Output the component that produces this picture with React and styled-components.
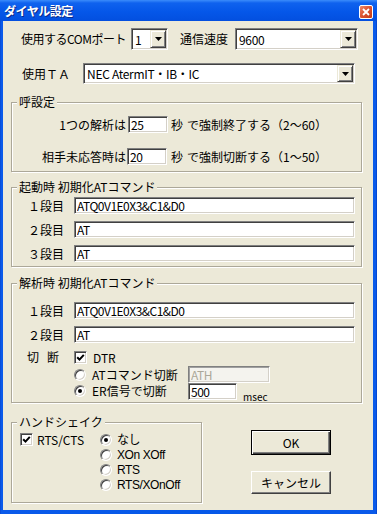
import React from 'react';
import styled, { createGlobalStyle } from 'styled-components';

const GlobalStyle = createGlobalStyle`
  html, body {
    margin: 0;
    padding: 0;
    background: #fff;
  }
  body {
    font-family: "Noto Sans CJK JP", "Noto Sans", sans-serif;
    font-size: 12px;
    color: #000;
  }
`

const Window = styled.div`
  width: 377px;
  height: 514px;
  display: flex;
  flex-direction: column;
  background: linear-gradient(90deg, #0843C8 0, #0A5AEA 1px, #0558E8 50%, #0A5AEA calc(100% - 1px), #0036B8 100%);
`
const TitleBar = styled.div`
  height: 21px;
  flex: none;
  display: flex;
  align-items: center;
  justify-content: space-between;
  padding: 0 4px 0 4px;
  background: linear-gradient(#3B8CFB 0, #0F62EE 3px, #0557E9 55%, #034FDF 100%);
`
const Title = styled.div`
  color: #fff;
  font-weight: bold;
  font-size: 12px;
  line-height: 14px;
  letter-spacing: -0.5px;
  text-shadow: 1px 1px 0 #0A2A8A;
`
const CloseButton = styled.div`
  width: 12px;
  height: 12px;
  margin-top: 2px;
  border: 1px solid #fff;
  border-radius: 2px;
  background: linear-gradient(135deg, #EE8A6A 0, #DD5533 45%, #C23A18 100%);
  display: flex;
  align-items: center;
  justify-content: center;
`
const Client = styled.div`
  flex: 1;
  margin: 0 4px 4px 3px;
  padding: 7px 11px 0 8px;
  background: #ECE9D8;
  display: flex;
  flex-direction: column;
`
const Row = styled.div`
  display: flex;
  align-items: center;
  height: ${p => p.$h}px;
  margin: ${p => p.$top || 0}px 0 0 ${p => p.$left || 0}px;
`
const Label = styled.span`
  flex: none;
  width: ${p => p.$w ? `${p.$w}px` : 'auto'};
  margin-left: ${p => p.$ml || 0}px;
  text-align: ${p => p.$right ? 'right' : 'left'};
  letter-spacing: ${p => p.$ls || 0}px;
  line-height: 14px;
  white-space: nowrap;
`
const ComboBox = styled.div`
  flex: none;
  box-sizing: border-box;
  width: ${p => p.$w}px;
  height: ${p => p.$h}px;
  display: flex;
  align-items: stretch;
  background: #fff;
  border: 1px solid;
  border-color: #808080 #fff #fff #808080;
  box-shadow: inset 1px 1px 0 #404040, inset -1px -1px 0 #D4D0C8;
  padding: 1px;
`
const ComboText = styled.span`
  flex: 1;
  padding-left: 2px;
  display: flex;
  align-items: center;
  white-space: nowrap;
  overflow: hidden;
  letter-spacing: -0.3px;
`
const DropButton = styled.span`
  flex: none;
  width: 16px;
  box-sizing: border-box;
  display: flex;
  align-items: center;
  justify-content: center;
  background: #ECE9D8;
  border: 1px solid;
  border-color: #ECE9D8 #404040 #404040 #ECE9D8;
  box-shadow: inset 1px 1px 0 #fff, inset -1px -1px 0 #808080;
`
const Group = styled.fieldset`
  margin: ${p => p.$top}px 0 0 0;
  padding: 0;
  width: ${p => p.$w ? `${p.$w}px` : 'auto'};
  box-sizing: border-box;
  min-width: 0;
  border: 1px solid #ACA899;
  box-shadow: inset 1px 1px 0 #fff, 1px 1px 0 #fff;
`
const Legend = styled.legend`
  margin-left: 5px;
  padding: 0 2px;
  line-height: 14px;
  font-size: 12px;
  background: #ECE9D8;
`
const GroupBody = styled.div`
  display: flex;
  flex-direction: column;
  gap: ${p => p.$gap || 0}px;
  padding: ${p => p.$pad};
`
const Edit = styled.input`
  flex: none;
  box-sizing: border-box;
  width: ${p => p.$w}px;
  height: 17px;
  margin: 0 0 0 ${p => p.$ml || 0}px;
  padding: 0 2px;
  font-family: "Noto Sans CJK JP", "Noto Sans", sans-serif;
  font-size: 12px;
  letter-spacing: -0.5px;
  color: ${p => p.disabled ? '#ACA899' : '#000'};
  background: ${p => p.disabled ? '#F4F3EE' : '#fff'};
  border: 1px solid;
  border-color: #808080 #fff #fff #808080;
  box-shadow: inset 1px 1px 0 ${p => p.disabled ? '#A0A0A0' : '#404040'}, inset -1px -1px 0 #D4D0C8;
  outline: none;
`
const CheckItem = styled.label`
  display: flex;
  align-items: center;
  gap: ${p => p.$gap || 6}px;
  height: 15px;
  align-self: ${p => p.$align || 'center'};
  line-height: 14px;
  white-space: nowrap;
  grid-column: ${p => p.$span ? '1 / -1' : 'auto'};
`
const CheckBox = styled.span`
  flex: none;
  width: 13px;
  height: 13px;
  box-sizing: border-box;
  background: #fff;
  border: 1px solid;
  border-color: #808080 #fff #fff #808080;
  box-shadow: inset 1px 1px 0 #404040, inset -1px -1px 0 #D4D0C8;
  display: flex;
  align-items: center;
  justify-content: center;
`
const RadioDot = styled.span`
  flex: none;
  width: 12px;
  height: 12px;
  box-sizing: border-box;
  border-radius: 50%;
  background: #fff;
  border: 1px solid;
  border-color: #808080 #fff #fff #808080;
  box-shadow: inset 1px 1px 0 #404040, inset -1px -1px 0 #D4D0C8;
  display: flex;
  align-items: center;
  justify-content: center;

  &::after {
    content: "";
    width: 4px;
    height: 4px;
    border-radius: 50%;
    background: ${p => p.$on ? '#000' : 'transparent'};
  }
`
const CutBlock = styled.div`
  display: flex;
  margin-top: 5px;
`
const CutGrid = styled.div`
  display: grid;
  grid-template-columns: 114px auto;
  grid-template-rows: 16px 17px 17px;
`
const Inline = styled.div`
  display: flex;
  align-items: flex-end;
`
const Msec = styled.span`
  font-size: 10px;
  line-height: 10px;
  margin: 0 0 -2px 6px;
`
const Bottom = styled.div`
  display: flex;
  margin-top: 12px;
`
const HandBody = styled.div`
  display: flex;
  padding: 3px 0 10px 8px;
`
const RadioColumn = styled.div`
  display: grid;
  grid-auto-rows: 15px;
  font-family: "Liberation Sans", "Noto Sans CJK JP", sans-serif;
  letter-spacing: -0.4px;
`
const ButtonColumn = styled.div`
  display: flex;
  flex-direction: column;
  gap: 16px;
  margin-left: 49px;
  padding-top: 15px;
`
const Button = styled.button`
  width: 80px;
  height: ${p => p.$default ? 25 : 23}px;
  box-sizing: border-box;
  padding: 0;
  font-family: "Noto Sans CJK JP", "Noto Sans", sans-serif;
  font-size: 12px;
  color: #000;
  background: #ECE9D8;
  border: 1px solid;
  border-color: ${p => p.$default ? '#000' : '#fff #404040 #404040 #fff'};
  box-shadow: ${p => p.$default
    ? 'inset 1px 1px 0 #fff, inset -1px -1px 0 #404040, inset -2px -2px 0 #808080'
    : 'inset -1px -1px 0 #808080'};
`

const Arrow = () => (
  <svg width="7" height="4" viewBox="0 0 7 4">
    <polygon points="0,0 7,0 3.5,4" fill="#000" />
  </svg>
)

const Combo = ({ w, h, value }) => (
  <ComboBox $w={w} $h={h}>
    <ComboText>{value}</ComboText>
    <DropButton><Arrow /></DropButton>
  </ComboBox>
)

const Check = ({ label, gap, span, align }) => (
  <CheckItem $gap={gap} $span={span} $align={align}>
    <CheckBox>
      <svg width="9" height="9" viewBox="0 0 9 9">
        <polyline points="1.2,4.2 3.5,6.6 7.8,1.8" fill="none" stroke="#000" strokeWidth="2" />
      </svg>
    </CheckBox>
    {label}
  </CheckItem>
)

const Radio = ({ label, on, gap, align }) => (
  <CheckItem $gap={gap} $align={align}>
    <RadioDot $on={on} />
    {label}
  </CheckItem>
)

const CommandRow = ({ label, value }) => (
  <Row $h={17}>
    <Label $w={46}>{label}</Label>
    <Edit $w={281} defaultValue={value} readOnly />
  </Row>
)

export default function App() {
  return (
    <>
      <GlobalStyle />
      <Window>
        <TitleBar>
          <Title>ダイヤル設定</Title>
          <CloseButton>
            <svg width="8" height="8" viewBox="0 0 8 8">
              <path d="M1 1 L7 7 M7 1 L1 7" stroke="#fff" strokeWidth="1.8" />
            </svg>
          </CloseButton>
        </TitleBar>
        <Client>
          <Row $h={22} $left={10}>
            <Label $w={110} $ls={-0.5}>使用するCOMポート</Label>
            <Combo w={37} h={22} value="1" />
            <Label $w={55} $ml={12}>通信速度</Label>
            <Combo w={123} h={22} value="9600" />
          </Row>
          <Row $h={21} $top={13} $left={11}>
            <Label $w={61}>使用ＴＡ</Label>
            <Combo w={272} h={21} value="NEC AtermIT・IB・IC" />
          </Row>

          <Group $top={11}>
            <Legend>呼設定</Legend>
            <GroupBody $gap={15} $pad="7px 0 6px 0">
              <Row $h={17}>
                <Label $w={114} $right>1つの解析は</Label>
                <Edit $w={40} $ml={2} defaultValue="25" readOnly />
                <Label $ml={3}>秒</Label>
                <Label $ml={4}>で強制終了する（2〜60）</Label>
              </Row>
              <Row $h={17}>
                <Label $w={114} $right>相手未応答時は</Label>
                <Edit $w={40} $ml={1} defaultValue="20" readOnly />
                <Label $ml={4}>秒</Label>
                <Label $ml={4}>で強制切断する（1〜50）</Label>
              </Row>
            </GroupBody>
          </Group>

          <Group $top={8}>
            <Legend>起動時 初期化ATコマンド</Legend>
            <GroupBody $gap={7} $pad="3px 0 4px 16px">
              <CommandRow label="１段目" value="ATQ0V1E0X3&C1&D0" />
              <CommandRow label="２段目" value="AT" />
              <CommandRow label="３段目" value="AT" />
            </GroupBody>
          </Group>

          <Group $top={9}>
            <Legend>解析時 初期化ATコマンド</Legend>
            <GroupBody $gap={7} $pad="12px 0 2px 16px">
              <CommandRow label="１段目" value="ATQ0V1E0X3&C1&D0" />
              <CommandRow label="２段目" value="AT" />
            </GroupBody>
            <GroupBody $pad="0 0 2px 15px">
              <CutBlock>
                <Label $w={47} $ls={-2}>切　断</Label>
                <CutGrid>
                  <Check label="DTR" span align="start" />
                  <Radio label="ATコマンド切断" />
                  <Edit $w={82} defaultValue="ATH" disabled />
                  <Radio label="ER信号で切断" on align="start" />
                  <Inline>
                    <Edit $w={49} defaultValue="500" readOnly />
                    <Msec>msec</Msec>
                  </Inline>
                </CutGrid>
              </CutBlock>
            </GroupBody>
          </Group>

          <Bottom>
            <Group $top={0} $w={191}>
              <Legend>ハンドシェイク</Legend>
              <HandBody>
                <Label $w={80}>
                  <Check label="RTS/CTS" gap={4} />
                </Label>
                <RadioColumn>
                  <Radio label="なし" on gap={5} />
                  <Radio label="XOn XOff" gap={5} />
                  <Radio label="RTS" gap={5} />
                  <Radio label="RTS/XOnOff" gap={5} />
                </RadioColumn>
              </HandBody>
            </Group>
            <ButtonColumn>
              <Button $default>OK</Button>
              <Button>キャンセル</Button>
            </ButtonColumn>
          </Bottom>
        </Client>
      </Window>
    </>
  )
}
